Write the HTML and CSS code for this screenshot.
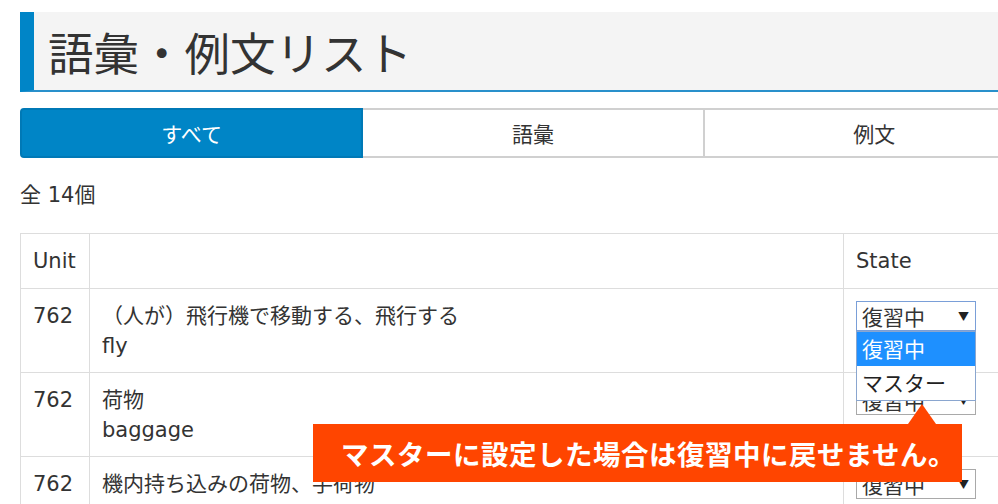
FILE: index.html
```html
<!DOCTYPE html>
<html lang="ja">
<head>
<meta charset="utf-8">
<title>語彙・例文リスト</title>
<link rel="stylesheet" href="styles.css">
</head>
<body>
<div class="page">
  <h1 class="title">語彙・例文リスト</h1>

  <div class="tabs">
    <div class="tab active">すべて</div>
    <div class="tab">語彙</div>
    <div class="tab">例文</div>
  </div>

  <p class="count">全 14個</p>

  <div class="table-wrap">
    <table class="list">
      <colgroup>
        <col class="c-unit">
        <col class="c-text">
        <col class="c-state">
      </colgroup>
      <thead>
        <tr><th>Unit</th><th></th><th>State</th></tr>
      </thead>
      <tbody>
        <tr>
          <td>762</td>
          <td>（人が）飛行機で移動する、飛行する<br>fly</td>
          <td>
            <div class="select-holder">
              <div class="select focused"><span>復習中</span><span class="arrow">▼</span></div>
              <ul class="dropdown">
                <li class="selected">復習中</li>
                <li>マスター</li>
              </ul>
            </div>
          </td>
        </tr>
        <tr>
          <td>762</td>
          <td>荷物<br>baggage</td>
          <td><div class="select"><span>復習中</span><span class="arrow">▼</span></div></td>
        </tr>
        <tr>
          <td>762</td>
          <td>機内持ち込みの荷物、手荷物</td>
          <td><div class="select"><span>復習中</span><span class="arrow">▼</span></div></td>
        </tr>
      </tbody>
    </table>
    <div class="callout">マスターに設定した場合は復習中に戻せません。</div>
  </div>
</div>
</body>
</html>
```

FILE: styles.css
```css
html, body {
  margin: 0;
  padding: 0;
  overflow: hidden;
  background: #fff;
}

body {
  font-family: "DejaVu Sans", "Noto Sans CJK JP", sans-serif;
  color: #333;
  font-size: 21px;
  line-height: 30px;
}

.page {
  width: 1026px;
  padding: 12px 0 0 20px;
}

.title {
  margin: 0;
  height: 78px;
  background: #f4f4f4;
  border-left: 14px solid #0085c7;
  border-bottom: 2px solid #2990cb;
  padding-left: 14px;
  font-family: "Noto Sans CJK JP", sans-serif;
  font-weight: normal;
  font-size: 45.5px;
  line-height: 78px;
  color: #333;
  box-sizing: content-box;
}

.tabs {
  display: flex;
  margin-top: 16px;
  height: 50px;
}

.tab {
  flex: 1;
  box-sizing: border-box;
  border: 2px solid #d0d0d0;
  margin-left: -2px;
  text-align: center;
  font-family: "Noto Sans CJK JP", sans-serif;
  font-size: 21px;
  line-height: 46px;
  color: #333;
  background: #fff;
}

.tab:first-child {
  margin-left: 0;
}

.tab.active {
  background: #0085c6;
  border-color: #0079b6;
  color: #fff;
  border-radius: 4px 0 0 4px;
  position: relative;
  z-index: 1;
}

.count {
  margin: 22px 0 23px;
  font-size: 21px;
  line-height: 30px;
}

.table-wrap {
  position: relative;
}

.list {
  width: 100%;
  border-collapse: collapse;
  table-layout: fixed;
  border: 1px solid #ddd;
}

.c-unit { width: 69px; }
.c-text { width: 754px; }

.list th,
.list td {
  border: 1px solid #ddd;
  padding: 12px 12px 11px;
  text-align: left;
  vertical-align: top;
  font-weight: normal;
  line-height: 30px;
}

.list th {
  padding-bottom: 12px;
}

.select-holder {
  position: relative;
}

.select {
  box-sizing: border-box;
  width: 120px;
  height: 30px;
  border: 1px solid #a9a9a9;
  background: #fff;
  display: flex;
  justify-content: space-between;
  align-items: center;
  padding: 0 6px 0 5px;
  font-family: "Noto Sans CJK JP", sans-serif;
  font-size: 21px;
  line-height: 28px;
  color: #333;
}

.select.focused {
  border-color: #7a9fd8;
}

.arrow {
  font-size: 11px;
  color: #222;
  line-height: 1;
}

.dropdown {
  position: absolute;
  top: 30px;
  left: 0;
  width: 120px;
  box-sizing: border-box;
  margin: 0;
  padding: 0;
  list-style: none;
  border: 1px solid #8aa6cf;
  background: #fff;
  z-index: 3;
  font-family: "Noto Sans CJK JP", sans-serif;
  font-size: 21px;
}

.dropdown li {
  height: 34px;
  line-height: 32px;
  padding-left: 5px;
  color: #222;
}

.dropdown li.selected {
  background: #1e90ff;
  color: #fff;
}

.callout {
  position: absolute;
  left: 293px;
  top: 191px;
  width: 649px;
  height: 58px;
  box-sizing: border-box;
  padding-left: 22px;
  background: #ff4500;
  color: #fff;
  text-align: center;
  font-family: "Noto Sans CJK JP", sans-serif;
  font-weight: bold;
  font-size: 27.5px;
  letter-spacing: 0.5px;
  line-height: 58px;
  white-space: nowrap;
  z-index: 4;
}

.callout::before {
  content: "";
  position: absolute;
  right: 26px;
  top: -20px;
  border-left: 14px solid transparent;
  border-right: 14px solid transparent;
  border-bottom: 20px solid #ff4500;
}
```
